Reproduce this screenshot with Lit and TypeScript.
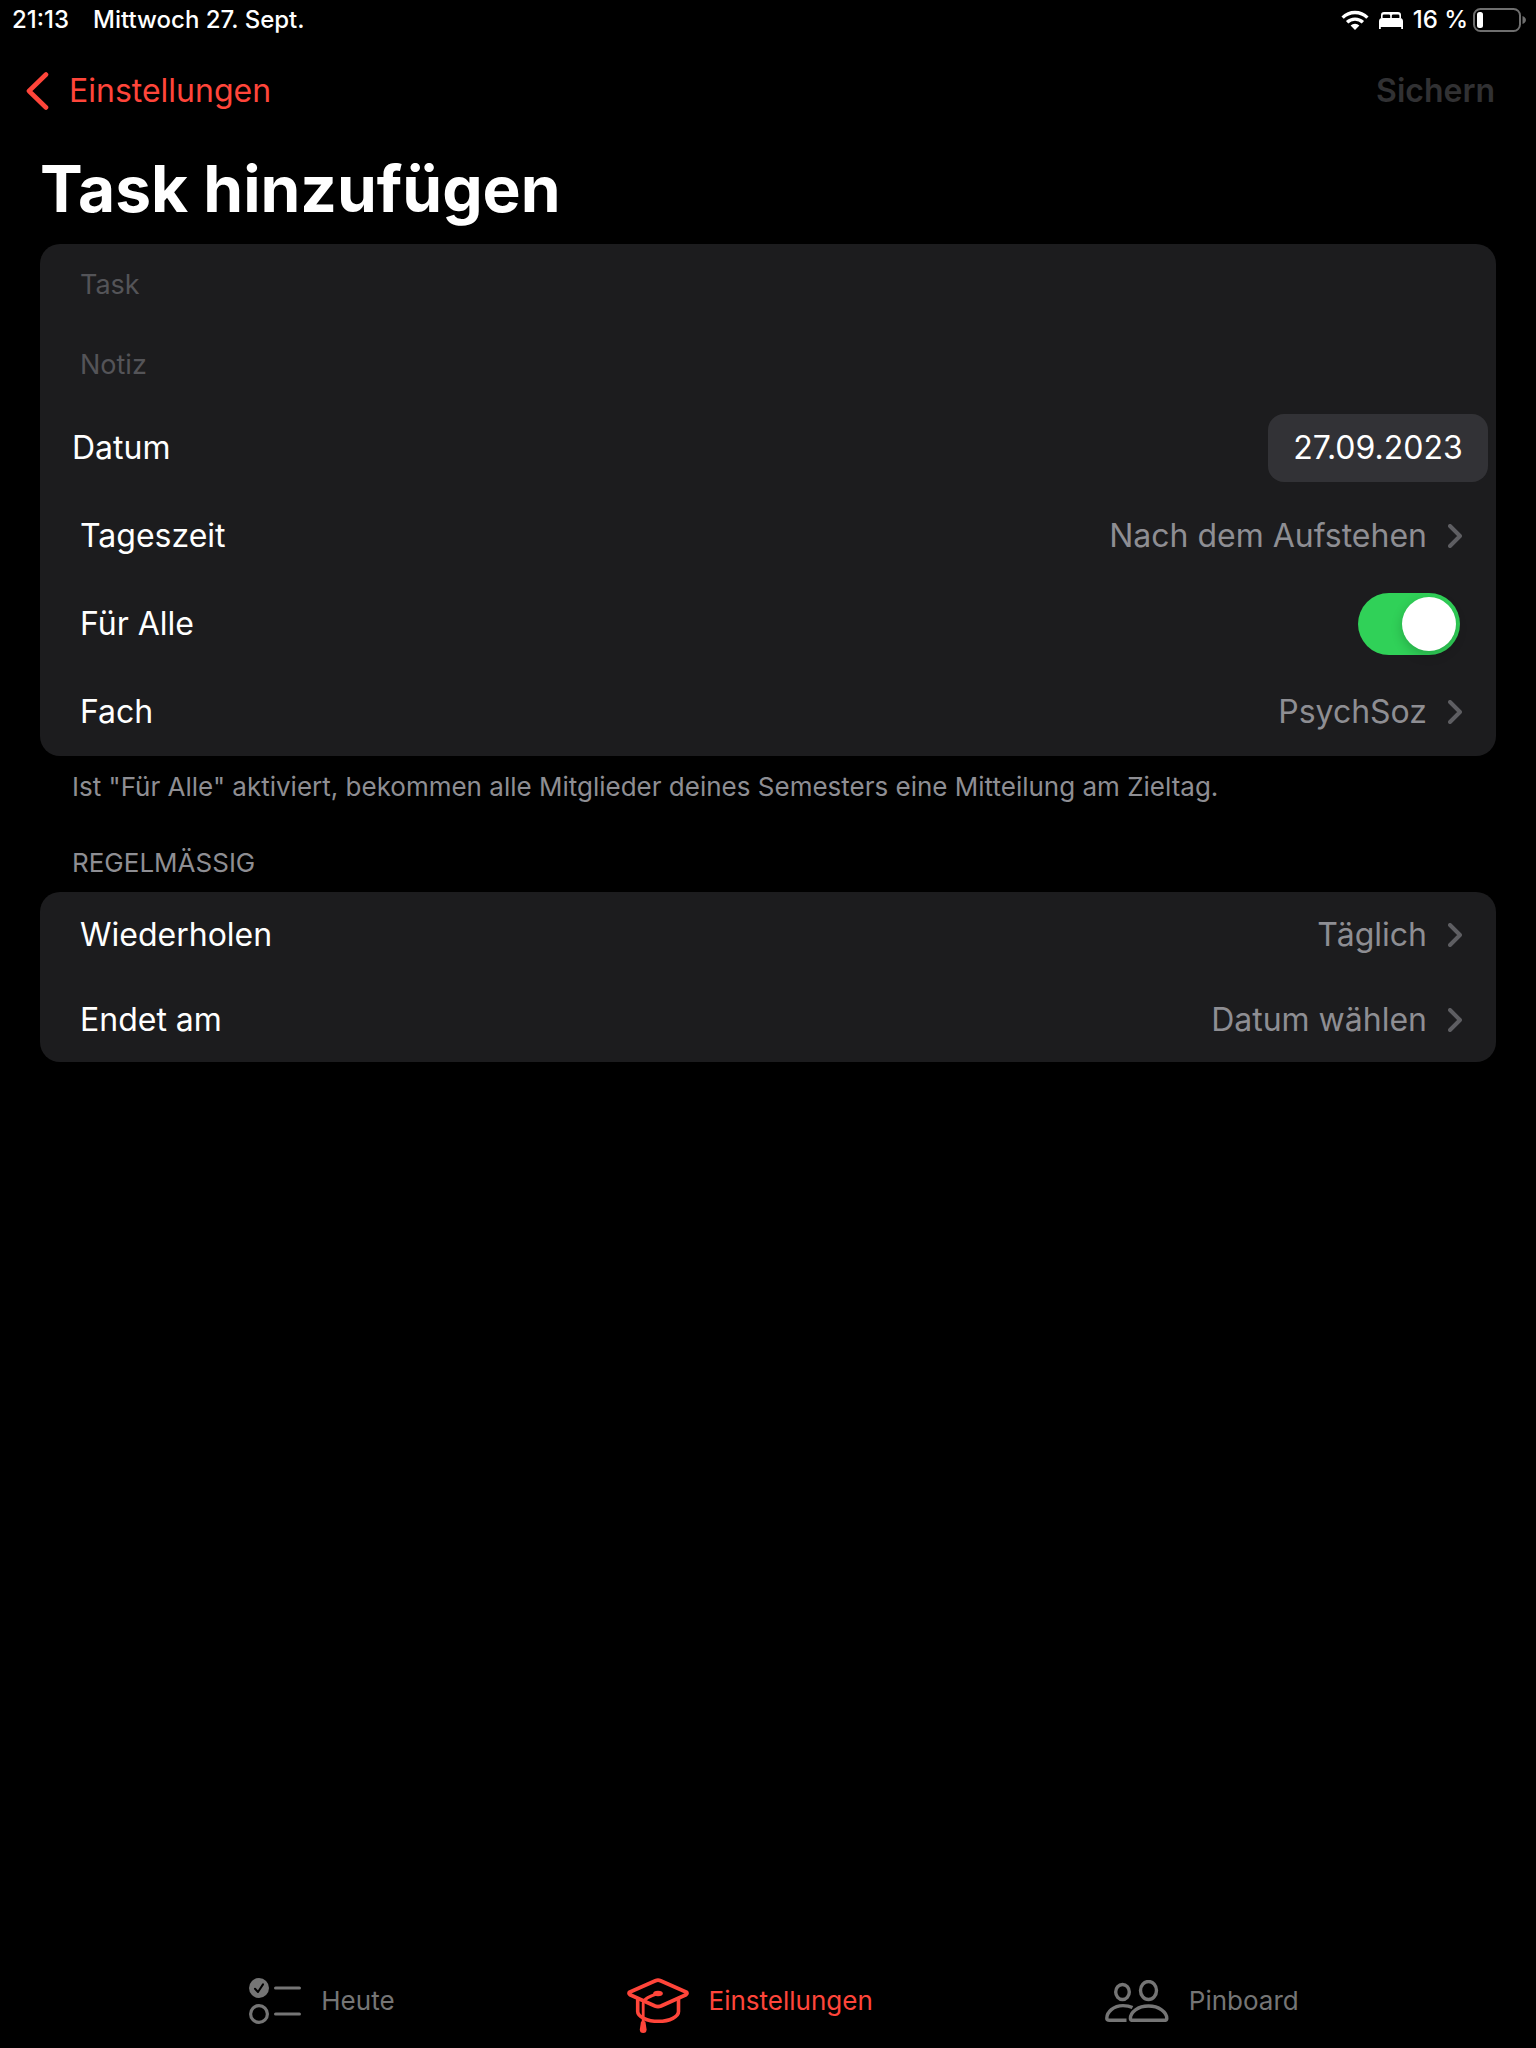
import { LitElement, html, css, svg } from "lit";
import { customElement, property, state } from "lit/decorators.js";

const chevron = html`<svg class="chevron" viewBox="0 0 14 24" width="14" height="24" aria-hidden="true">
  <path d="M2 2 L12 12 L2 22" fill="none" stroke="currentColor" stroke-width="4" stroke-linecap="round" stroke-linejoin="round" />
</svg>`;

const icons = {
  back: svg`<svg viewBox="0 0 23 38" width="23" height="38" aria-hidden="true">
    <path d="M20 2.500 L3 19 L20 35.500" fill="none" stroke="currentColor" stroke-width="4.600" stroke-linecap="round" stroke-linejoin="round"/>
  </svg>`,
  wifi: svg`<svg viewBox="0 0 28 20" width="28" height="20" aria-hidden="true">
    <g fill="none" stroke="currentColor" stroke-width="3.300">
      <path d="M1.600 7.600 A17.600 17.600 0 0 1 26.400 7.600"/>
      <path d="M6.100 12.300 A11.300 11.300 0 0 1 21.900 12.300"/>
    </g>
    <path d="M14 20 L9.600 15.600 A6.400 6.400 0 0 1 18.400 15.600 Z" fill="currentColor"/>
  </svg>`,
  bed: svg`<svg viewBox="0 0 24 17" width="24" height="17" aria-hidden="true">
    <g fill="currentColor">
      <path d="M2 6 V3 Q2 0 5 0 H19 Q22 0 22 3 V6 H20.400 V3.800 Q20.400 2.400 19 2.400 H14.200 Q12.800 2.400 12.800 3.800 V6 H11.200 V3.800 Q11.200 2.400 9.800 2.400 H5 Q3.600 2.400 3.600 3.800 V6 Z"/>
      <path d="M0 17 V9.500 Q0 6 3 6 H21 Q24 6 24 9.500 V17 H22.200 V15 H1.800 V17 Z"/>
    </g>
  </svg>`,
  battery: svg`<svg viewBox="0 0 53 24" width="53" height="24" aria-hidden="true">
    <rect x="1" y="1" width="46" height="22" rx="6.500" fill="none" stroke="#6e6e6e" stroke-width="2"/>
    <path d="M49.500 8 Q53 9.500 53 12 Q53 14.500 49.500 16 Z" fill="#6e6e6e"/>
    <rect x="4" y="4" width="6" height="16" rx="2.500" fill="#fff"/>
  </svg>`,
  list: svg`<svg viewBox="0 0 52 47" width="52" height="47" aria-hidden="true">
    <circle cx="10" cy="10" r="10" fill="currentColor"/>
    <path d="M6 10.800 L9 14 L14 6.400" fill="none" stroke="#000" stroke-width="2" stroke-linecap="round" stroke-linejoin="round"/>
    <circle cx="10" cy="36" r="8.400" fill="none" stroke="currentColor" stroke-width="3.200"/>
    <path d="M26.600 10 H50.400 M26.600 36 H50.400" stroke="currentColor" stroke-width="3.200" stroke-linecap="round"/>
  </svg>`,
  cap: svg`<svg viewBox="0 -8 62 63" width="62" height="63" aria-hidden="true">
    <g fill="none" stroke="currentColor" stroke-linejoin="round" stroke-linecap="round">
      <path stroke-width="3.800" d="M28.400 2.700 Q31 1.500 33.600 2.700 L59 13.900 Q61 15.300 59 16.700 L34 28.100 Q31 29.300 28 28.100 L3 16.700 Q1 15.300 3 13.900 Z"/>
      <path stroke-width="3.600" d="M10.700 21.500 V33.500 C10.700 38.500 20 43.300 31.500 43.300 C43 43.300 51.500 38.500 51.500 33.500 V21.500"/>
      <path stroke-width="2.800" d="M31 15.500 C24 17.800 16.600 20 16.200 25 V45"/>
    </g>
    <ellipse cx="31" cy="15.500" rx="4.800" ry="2.700" fill="currentColor"/>
    <path d="M14 43.500 H18.400 L19.600 51.500 Q19.600 55 16.200 55 Q12.800 55 12.800 51.500 Z" fill="currentColor"/>
  </svg>`,
  people: svg`<svg viewBox="0 0 64 42" width="64" height="42" aria-hidden="true">
    <g fill="none" stroke="currentColor" stroke-width="3.400">
      <ellipse cx="17.500" cy="12" rx="6.800" ry="7.500"/>
      <ellipse cx="43.500" cy="10.500" rx="8" ry="9"/>
      <path d="M27.500 27.500 C24.800 26.200 21.500 25.600 18 25.600 C8.500 25.600 1.800 32 1.800 38.200 Q1.800 40.300 4.500 40.300 H21.500"/>
      <path d="M43.500 26 C54 26 61.800 32 61.800 38.400 Q61.800 40.300 59 40.300 H28 Q25.400 40.300 25.400 38.400 C25.400 32 33 26 43.500 26 Z"/>
    </g>
  </svg>`,
};

@customElement("picker-row")
export class PickerRow extends LitElement {
  static styles = css`
    :host { display: block; }
    .row {
      display: flex; align-items: center; gap: 21px; width: 100%; height: 100%;
      padding: 0 34px 0 40px; border: 0; background: none;
      font: inherit; color: #fff; text-align: left;
    }
    .name { flex: 1; }
    .value { color: #8e8e93; }
    .chevron { color: #5e5e62; flex: none; }
  `;
  @property() name = "";
  @property() value = "";
  render() {
    return html`<button class="row" type="button">
      <span class="name">${this.name}</span>
      <span class="value">${this.value}</span>
      ${chevron}
    </button>`;
  }
}

@customElement("app-root")
export class AppRoot extends LitElement {
  static styles = css`
    :host {
      display: flex; flex-direction: column; min-height: 100vh;
      background: #000; color: #fff;
      font-family: Inter, "Liberation Sans", sans-serif;
      font-size: 32px; line-height: 40px;
      --accent: #ff453a;
      --card: #1c1c1e;
    }
    * { box-sizing: border-box; }
    svg { display: block; flex: none; }
    .status {
      display: flex; align-items: center; height: 40px; padding: 0 10px 0 12px;
      font-size: 24px; line-height: 28px; font-weight: 500;
    }
    .date { flex: 1; margin-left: 24px; }
    .signals { display: flex; align-items: center; gap: 10px; }
    .charge { display: flex; align-items: center; gap: 5px; }
    .nav {
      display: flex; align-items: center; justify-content: space-between;
      height: 102px; padding: 0 41px 0 26px;
    }
    .back { display: flex; align-items: center; gap: 20px; color: var(--accent); text-decoration: none; }
    .save { border: 0; padding: 0; background: none; font: inherit; font-weight: 600; color: #313133; }
    .title { margin: 0; padding: 7px 40px 15px; font-size: 64px; line-height: 80px; font-weight: 700; }
    .content { flex: 1; }
    .card { margin: 0 40px; border-radius: 20px; background: var(--card); overflow: hidden; }
    .field {
      display: block; width: 100%; height: 80px; padding: 0 40px; border: 0; outline: 0;
      background: none; color: #fff; font: inherit; font-size: 27px;
    }
    .field::placeholder { color: #545458; opacity: 1; }
    .row { display: flex; align-items: center; justify-content: space-between; height: 88px; }
    .when { padding: 0 8px 0 32px; }
    .chip {
      height: 68px; width: 220px; padding: 0; border: 0; border-radius: 16px;
      background: #323236; color: #fff; font: inherit;
    }
    .all { padding: 0 36px 0 40px; }
    .switch {
      appearance: none; margin: 0; width: 102px; height: 62px; padding: 4px; border-radius: 31px;
      display: flex; background: #39393d;
    }
    .switch::before {
      content: ""; width: 54px; height: 54px; border-radius: 50%; background: #fff;
      box-shadow: 0 4px 12px rgb(0 0 0 / 0.2);
    }
    .switch:checked { background: #30d158; justify-content: flex-end; }
    picker-row { height: 88px; }
    .repeat picker-row { height: 85px; }
    .note, .heading { margin: 0; padding: 0 72px; font-size: 26px; line-height: 32px; font-weight: 400; color: #8e8e93; }
    .note { padding-top: 15px; }
    .heading { padding-top: 44px; padding-bottom: 13px; }
    .tabs {
      display: flex; justify-content: center; gap: 232px; height: 94px; align-items: center;
      padding-left: 12px; font-size: 26px;
    }
    .tab { display: flex; align-items: center; gap: 20px; color: #757575; text-decoration: none; }
    .tab.active { color: var(--accent); }
  `;

  @state() private forAll = true;

  render() {
    return html`
      <div class="status">
        <span class="time">21:13</span>
        <span class="date">Mittwoch 27. Sept.</span>
        <div class="signals">
          ${icons.wifi}${icons.bed}
          <span class="charge"><span>16 %</span>${icons.battery}</span>
        </div>
      </div>
      <nav class="nav">
        <a class="back" href="#einstellungen">${icons.back}<span>Einstellungen</span></a>
        <button class="save" type="button" disabled>Sichern</button>
      </nav>
      <main class="content">
        <h1 class="title">Task hinzufügen</h1>
        <section class="card">
          <input class="field" type="text" placeholder="Task" aria-label="Task" />
          <input class="field" type="text" placeholder="Notiz" aria-label="Notiz" />
          <div class="row when">
            <label for="datum">Datum</label>
            <button class="chip" id="datum" type="button">27.09.2023</button>
          </div>
          <picker-row name="Tageszeit" value="Nach dem Aufstehen"></picker-row>
          <div class="row all">
            <label for="alle">Für Alle</label>
            <input class="switch" id="alle" type="checkbox" role="switch" .checked=${this.forAll}
              @change=${(e: Event) => (this.forAll = (e.target as HTMLInputElement).checked)} />
          </div>
          <picker-row name="Fach" value="PsychSoz"></picker-row>
        </section>
        <p class="note">Ist "Für Alle" aktiviert, bekommen alle Mitglieder deines Semesters eine Mitteilung am Zieltag.</p>
        <h2 class="heading">REGELMÄSSIG</h2>
        <section class="card repeat">
          <picker-row name="Wiederholen" value="Täglich"></picker-row>
          <picker-row name="Endet am" value="Datum wählen"></picker-row>
        </section>
      </main>
      <nav class="tabs">
        <a class="tab" href="#heute">${icons.list}<span>Heute</span></a>
        <a class="tab active" href="#einstellungen" aria-current="page">${icons.cap}<span>Einstellungen</span></a>
        <a class="tab" href="#pinboard">${icons.people}<span>Pinboard</span></a>
      </nav>
    `;
  }
}
